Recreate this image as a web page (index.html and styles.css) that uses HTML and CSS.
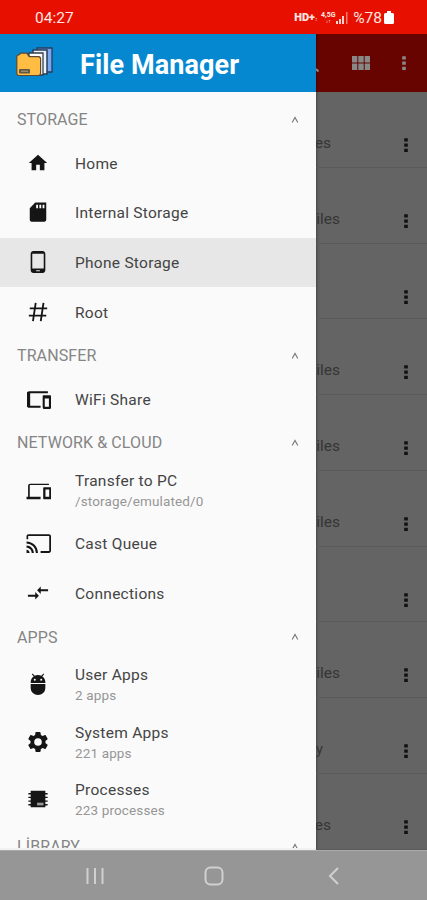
FILE: index.html
```html
<!DOCTYPE html>
<html lang="en">
<head>
<meta charset="utf-8">
<title>File Manager</title>
<link rel="stylesheet" href="styles.css">
</head>
<body>
<svg class="defs" width="0" height="0">
  <symbol id="dots" viewBox="0 0 6 18"><path d="M1.200 2.200h3.600v3.300H1.200zM1.200 7.500h3.600v3.300H1.200zM1.200 12.800h3.600v3.300H1.200z"/></symbol>
  <symbol id="caret" viewBox="0 0 8 8"><path d="M1.200 6.500 4 1.500 6.800 6.500" fill="none" stroke="#777" stroke-width="1.1"/></symbol>
</svg>
<div class="phone">
  <header class="status">
    <span class="clock">04:27</span>
    <div class="signals">
      <b class="hd">HD+<small>↕</small></b>
      <span class="net"><b>4,5G</b><i>↓↑</i></span>
      <svg class="bars" width="12" height="12" viewBox="0 0 12 12"><path d="M0 9h2v3H0zM3 7h2v5H3zM6 4h2v8H6z" fill="#ffd0cb"/><path d="M10 0h1.5v12H10z" fill="#f47b72"/></svg>
      <span class="percent">%78</span>
      <svg width="10" height="13" viewBox="0 0 10 13"><path d="M3 0h4v2h1.500q1.500 0 1.500 1.500v8Q10 13 8.500 13h-7Q0 13 0 11.500v-8Q0 2 1.500 2H3z" fill="#fff"/></svg>
    </div>
  </header>
  <div class="stage">
    <aside class="drawer">
      <div class="brand">
        <svg width="40" height="34" viewBox="0 0 40 34">
          <path d="M21 3h15v24H21z" fill="#78a9f0" stroke="#293c59" stroke-width="1.300"/>
          <path d="M17 5h14v24H17z" fill="#e9f2ff" stroke="#293c59" stroke-width="1.500"/>
          <path d="M13 8h14v22H13z" fill="#fff" stroke="#333d49" stroke-width="1.300"/>
          <path d="M16 12h8M16 15h8" stroke="#68727c"/>
          <path d="M.8 12q0-2 2-2l2-1.800h6l2.500 3.500h9q2.300 0 2.300 2.300v14q0 2.500-2.300 2.500H3Q.8 30.500.8 28z" fill="#ffbd43" stroke="#5c4935" stroke-width="1.200"/>
          <rect x="3" y="24" width="11" height="4.500" rx="1" fill="#605746"/><path d="M5 26.200h7" stroke="#b8a27a"/>
        </svg>
        <h1>File Manager</h1>
      </div>
      <nav class="menu">
        <h2>STORAGE<svg><use href="#caret"/></svg></h2>
        <a class="item"><svg viewBox="0 0 24 24"><path d="M10 20v-6h4v6h5v-8h3L12 3 2 12h3v8z"/></svg><span>Home</span></a>
        <a class="item"><svg viewBox="0 0 24 24"><path d="M21 1.500H9L3 8v12.500c0 1.100.9 2 2 2h14c1.100 0 2-.9 2-2zM12 8h-2V4h2zm3.500 0h-2V4h2zm3.500 0h-2V4h2z"/></svg><span>Internal Storage</span></a>
        <a class="item active"><svg viewBox="0 0 24 24"><path d="M17 0H7C5.340 0 4 1.340 4 3v18c0 1.660 1.340 3 3 3h10c1.660 0 3-1.340 3-3V3c0-1.660-1.340-3-3-3zm-3 22h-4v-1h4zm4.250-3H5.750V3h12.500z"/></svg><span>Phone Storage</span></a>
        <a class="item"><svg viewBox="0 0 24 24"><path d="M9.500 2 6.500 22M18 2l-3 20M3 8h19M2 16h19" fill="none" stroke="#151515" stroke-width="2"/></svg><span>Root</span></a>
        <h2>TRANSFER<svg><use href="#caret"/></svg></h2>
        <a class="item"><svg class="large" viewBox="0 0 24 24"><path d="M3 6h18V4H3c-1.100 0-2 .9-2 2v12c0 1.100.9 2 2 2h11v-2H3.500zm20 2h-6c-.6 0-1 .4-1 1v10c0 1.100.5 2 1 2h6c.6 0 1-.5 1-1V9c0-.6-.4-1-1-1zm-1 11h-4v-8h4z"/><path d="M1 5h3v14H1z"/></svg><span>WiFi Share</span></a>
        <h2>NETWORK &amp; CLOUD<svg><use href="#caret"/></svg></h2>
        <a class="item double"><svg class="large" viewBox="0 0 24 24"><path d="M3.600 5.800H22V4.500H4c-1.100 0-2 .9-2 2V17H.500v2.500H14V17H3.600zM23.500 8h-6c-.6 0-1 .4-1 1v9.500c0 .6.400 1 1 1h6c.6 0 1-.4 1-1V9c0-.6-.4-1-1-1zm-1.200 9h-3.600v-7h3.600z"/></svg><span>Transfer to PC<small>/storage/emulated/0</small></span></a>
        <a class="item"><svg class="large cast" viewBox="0 0 24 24"><path d="M22 3H2.500C1.400 3 .5 3.900.5 5v3h1.600V4.700h20.200v14.600H14V21h8c1.100 0 2-.9 2-2V5c0-1.100-.9-2-2-2zM.5 18v3h3c0-1.660-1.340-3-3-3zm0-4v2c2.760 0 5 2.240 5 5h2c0-3.870-3.130-7-7-7zm0-4v2a9 9 0 0 1 9 9h2c0-6.080-4.930-11-11-11z"/></svg><span>Cast Queue</span></a>
        <a class="item"><svg viewBox="0 0 24 24"><path d="M9.010 14H1v2h8.010v3L13 15l-3.990-4zm5.980-1v-3H23V8h-8.010V5L11 9z"/></svg><span>Connections</span></a>
        <h2>APPS<svg><use href="#caret"/></svg></h2>
        <a class="item double"><svg viewBox="0 0 24 24"><path d="M4 12v4.500a8 7.500 0 0 0 16 0V12zM16.700 3.800l2-2.400-.8-.8-2.300 2.500A8 8 0 0 0 12 2.300a8 8 0 0 0-3.600.8L6.100.6l-.8.8 2 2.400A7.500 7.500 0 0 0 4 10v1h16v-1a7.500 7.500 0 0 0-3.300-6.200zM8.500 8.500a1.100 1.100 0 1 1 0-2.200 1.100 1.100 0 0 1 0 2.200zm7 0a1.100 1.100 0 1 1 0-2.200 1.100 1.100 0 0 1 0 2.200z"/></svg><span>User Apps<small>2 apps</small></span></a>
        <a class="item double"><svg class="gear" viewBox="0 0 24 24"><path d="M19.430 12.980c.04-.32.070-.64.070-.98s-.03-.66-.07-.98l2.110-1.650c.19-.15.240-.42.120-.64l-2-3.460c-.12-.22-.39-.3-.61-.22l-2.490 1c-.52-.4-1.080-.73-1.690-.98l-.38-2.650A.49.490 0 0 0 14 2h-4c-.25 0-.46.180-.49.420l-.38 2.650c-.61.250-1.170.59-1.690.98l-2.490-1c-.23-.09-.49 0-.61.220l-2 3.460c-.13.220-.07.490.12.640l2.110 1.650c-.04.320-.07.650-.07.980s.03.660.07.980l-2.110 1.650c-.19.150-.24.420-.12.640l2 3.460c.12.220.39.300.61.220l2.490-1c.52.400 1.080.73 1.690.98l.38 2.650c.03.240.24.420.49.420h4c.25 0 .46-.18.490-.42l.38-2.650c.61-.25 1.170-.59 1.690-.98l2.490 1c.23.090.49 0 .61-.22l2-3.460c.12-.22.070-.49-.12-.64zM12 15.800a3.800 3.800 0 1 1 0-7.600 3.800 3.800 0 0 1 0 7.600z"/></svg><span>System Apps<small>221 apps</small></span></a>
        <a class="item double"><svg viewBox="0 0 24 24"><path d="M4 3h16v2.500h2.500V7H20v2.500h2.500V11H20v2.500h2.500V15H20v2.500h2.500V19H20v2H4v-2H1.500v-1.500H4V15H1.500v-1.500H4V11H1.500V9.500H4V7H1.500V5.500H4z"/><path d="M11 16h7v3h-7z" fill="#999"/></svg><span>Processes<small>223 processes</small></span></a>
        <h2>LİBRARY<svg><use href="#caret"/></svg></h2>
      </nav>
    </aside>
    <main class="files">
      <div class="toolbar">
        <svg class="search" width="4" height="8" viewBox="0 0 4 8"><path d="m0 3 2.500 2.500" stroke="#888" stroke-width="2"/></svg>
        <svg class="grid" width="18" height="14" viewBox="0 0 18 14"><path d="M0 0h5.300v6.400H0zM6.300 0h5.400v6.400H6.300zM12.700 0H18v6.400h-5.300zM0 7.500h5.300V14H0zM6.300 7.500h5.400V14H6.300zM12.700 7.500H18V14h-5.300z"/></svg>
        <svg class="more" width="6" height="18"><use href="#dots"/></svg>
      </div>
      <div class="row"><span class="short">es</span><svg><use href="#dots"/></svg></div>
      <div class="row"><span>iles</span><svg><use href="#dots"/></svg></div>
      <div class="row"><span></span><svg><use href="#dots"/></svg></div>
      <div class="row"><span>iles</span><svg><use href="#dots"/></svg></div>
      <div class="row"><span>iles</span><svg><use href="#dots"/></svg></div>
      <div class="row"><span>iles</span><svg><use href="#dots"/></svg></div>
      <div class="row"><span></span><svg><use href="#dots"/></svg></div>
      <div class="row"><span>iles</span><svg><use href="#dots"/></svg></div>
      <div class="row"><span class="single">y</span><svg><use href="#dots"/></svg></div>
      <div class="row"><span class="short">es</span><svg><use href="#dots"/></svg></div>
    </main>
  </div>
  <footer class="system">
    <svg width="18" height="18" viewBox="0 0 18 18"><path d="M1.500 1v16M9 1v16M16.500 1v16"/></svg>
    <svg width="20" height="20" viewBox="0 0 20 20"><rect x="1.500" y="1.500" width="17" height="17" rx="5"/></svg>
    <svg width="12" height="18" viewBox="0 0 12 18"><path d="m10 1-8 8 8 8"/></svg>
  </footer>
</div>
</body>
</html>
```
FILE: styles.css
```css
* { box-sizing: border-box; }
body { margin: 0; font-family: Roboto, "Liberation Sans", sans-serif; }
svg { display: block; flex: none; }
.defs { position: absolute; }
.phone { width: 427px; height: 900px; display: flex; flex-direction: column; overflow: hidden; }
.status { height: 34px; flex: none; background: #e71000; color: #ffe6e2; display: flex; align-items: center; justify-content: space-between; padding: 1px 33px 0 35px; font-size: 15.5px; }
.signals { display: flex; align-items: center; }
.hd { font-size: 11px; font-weight: 900; width: 26px; white-space: nowrap; }
.hd small { font-size: 5px; }
.net { width: 16px; display: flex; flex-direction: column; align-items: center; font-size: 7px; line-height: 7px; }
.net i { font-size: 5px; line-height: 5px; font-style: normal; }
.bars { margin-right: 5px; }
.percent { font-size: 15.5px; margin-right: 2px; }
.stage { flex: 1; min-height: 0; display: flex; }
.drawer { width: 316px; flex: none; background: #fafafa; border-bottom: 2px solid #f2f2f2; display: flex; flex-direction: column; overflow: hidden; }
.brand { height: 58px; flex: none; display: flex; align-items: center; gap: 24px; padding: 3px 0 0 16px; background: #0688d1; color: #fff; }
.brand svg { margin-top: -5px; }
h1 { margin: 0; font-size: 27px; line-height: 30px; font-weight: 700; letter-spacing: .1px; }
.menu { padding-top: 9px; }
h2 { height: 37.4px; margin: 0; padding: 0 17px; display: flex; align-items: center; justify-content: space-between; font-size: 16px; font-weight: 400; letter-spacing: .1px; color: #858585; }
h2 svg { width: 8px; height: 8px; }
.item { height: 49.7px; display: flex; align-items: center; padding: 1px 0 0 25px; color: #444; font-size: 15.5px; line-height: 20px; letter-spacing: .27px; }
.item.active { background: #e7e7e7; }
.item.double { height: 57.4px; padding-top: 2px; }
.item svg { width: 22px; height: 22px; margin: -2px 26px 0 2px; fill: #151515; }
.item svg.large { width: 25px; height: 25px; margin: 0 24px 0 1px; }
.item svg.cast { margin-top: -2px; }
.item svg.gear { width: 24px; height: 24px; margin: -2px 25px 0 1px; }
.item small { display: block; color: #969696; font-size: 13.5px; letter-spacing: .14px; }
.files { flex: 1; background: #646464; box-shadow: inset 3px 0 3px -2px #444; overflow: hidden; }
.toolbar { height: 58px; background: #680400; display: flex; align-items: center; box-shadow: inset 3px 0 3px -2px #400; }
.grid { fill: #888; margin-left: 32px; }
.more { fill: #888; margin-left: 31px; }
.search { margin-top: 14px; }
.row { height: 75.75px; padding: 26px 18px 0 0; display: flex; justify-content: space-between; border-bottom: 1px solid #5a5a5a; }
.row span { width: 24px; display: flex; justify-content: flex-end; font-size: 15.5px; line-height: 50px; height: 50px; color: #353535; overflow: hidden; }
.row .short { width: 15px; }
.row .single { width: 7px; }
.row svg { width: 6px; height: 18px; margin-top: 18px; fill: #111; }
.system { height: 50px; flex: none; background: #969696; border-top: 1px solid #aaa; display: flex; align-items: center; padding: 1px 0 0 86px; }
.system svg { fill: none; stroke: #d0d0d0; stroke-width: 2; }
.system svg + svg { margin-left: 100px; }
.system svg:last-child { margin-left: 104px; }
```
